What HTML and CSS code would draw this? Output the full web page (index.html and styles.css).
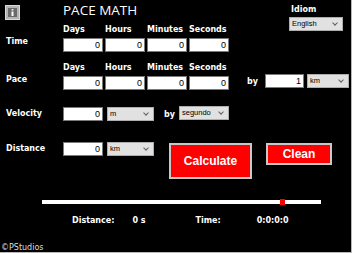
FILE: index.html
```html
<!DOCTYPE html>
<html lang="en">
<head>
    <meta charset="UTF-8">
    <title>Pace Math</title>
    <link rel="stylesheet" href="styles.css">
</head>
<body>

<div class="frame">
    <div class="top">
        <svg class="info-icon" width="15" height="15" viewBox="0 0 15 15">
            <rect x="0.5" y="0.5" width="14" height="14" fill="#b4b4b4" stroke="#d8d8d8"/>
            <rect x="3" y="3" width="9" height="9" fill="#6a6a6a"/>
            <rect x="6.5" y="4" width="2" height="1.5" fill="#e8e8e8"/>
            <rect x="6.5" y="6.5" width="2" height="4.5" fill="#ffffff"/>
        </svg>
        <h1 class="title">PACE MATH</h1>
        <div class="idiom">
            <span class="lbl">Idiom</span>
            <div class="select select-idiom">English<span class="chev"></span></div>
        </div>
    </div>

    <div class="row row-time">
        <span class="lbl row-label">Time</span>
        <div class="fields">
            <div class="field"><span class="lbl">Days</span><div class="input">0</div></div>
            <div class="field"><span class="lbl">Hours</span><div class="input">0</div></div>
            <div class="field"><span class="lbl">Minutes</span><div class="input">0</div></div>
            <div class="field"><span class="lbl">Seconds</span><div class="input">0</div></div>
        </div>
    </div>

    <div class="row row-pace">
        <span class="lbl row-label">Pace</span>
        <div class="fields">
            <div class="field"><span class="lbl">Days</span><div class="input">0</div></div>
            <div class="field"><span class="lbl">Hours</span><div class="input">0</div></div>
            <div class="field"><span class="lbl">Minutes</span><div class="input">0</div></div>
            <div class="field"><span class="lbl">Seconds</span><div class="input">0</div></div>
        </div>
        <div class="pace-by">
            <span class="lbl by">by</span>
            <div class="input input-by">1</div>
            <div class="select select-unit">km<span class="chev"></span></div>
        </div>
    </div>

    <div class="row row-velocity">
        <span class="lbl row-label">Velocity</span>
        <div class="input input-single">0</div>
        <div class="select select-small">m<span class="chev"></span></div>
        <span class="lbl by-vel">by</span>
        <div class="select select-time">segundo<span class="chev"></span></div>
    </div>

    <div class="row row-distance">
        <span class="lbl row-label">Distance</span>
        <div class="input input-single">0</div>
        <div class="select select-small">km<span class="chev"></span></div>
        <button type="button" class="btn btn-calc">Calculate</button>
        <button type="button" class="btn btn-clean">Clean</button>
    </div>

    <div class="track">
        <div class="thumb"></div>
    </div>

    <div class="results">
        <span class="lbl res-dist">Distance:</span>
        <span class="lbl res-dist-val">0 s</span>
        <span class="lbl res-time">Time:</span>
        <span class="lbl res-time-val">0:0:0:0</span>
    </div>

    <div class="footer">©PStudios</div>
</div>

</body>
</html>
```

FILE: styles.css
```css
/* Global */
body {
    margin: 0;
    background: #000;
    font-family: "DejaVu Sans", sans-serif;
}

/* Window frame */
.frame {
    width: 351px;
    height: 252px;
    background: #000;
    border-right: 1px solid #b8b8b8;
    border-bottom: 1px solid #b8b8b8;
    overflow: hidden;
}

/* Small bold labels */
.lbl {
    display: block;
    color: #fff;
    font-size: 8px;
    font-weight: bold;
    line-height: 11px;
    white-space: nowrap;
}

/* Header */
.top {
    display: flex;
    align-items: flex-start;
    height: 24px;
}

.info-icon {
    display: block;
    margin: 5px 0 0 5px;
}

.title {
    margin: 2px 0 0 43px;
    color: #fff;
    font-family: "Open Sans", sans-serif;
    font-size: 13.5px;
    font-weight: normal;
    line-height: 16px;
}

.idiom {
    margin: 4px 8px 0 auto;
    display: flex;
    flex-direction: column;
}

.idiom .lbl {
    margin: 0 0 2px 2px;
}

/* Rows */
.row {
    display: flex;
    align-items: flex-start;
}

.row-label {
    width: 57px;
    padding-left: 6px;
}

.row-time .row-label,
.row-pace .row-label {
    margin-top: 12px;
}

.row-pace {
    margin-top: 10px;
}

.fields {
    display: flex;
    gap: 2px;
}

.field .lbl {
    margin-bottom: 3px;
}

/* Text boxes */
.input {
    box-sizing: border-box;
    width: 40px;
    height: 14px;
    background: #fff;
    border: 1px solid #7a7a7a;
    color: #000;
    font-family: "Liberation Sans", sans-serif;
    font-size: 9px;
    line-height: 12px;
    text-align: right;
    padding-right: 2px;
}

/* Combo boxes */
.select {
    position: relative;
    box-sizing: border-box;
    height: 14px;
    background: #e1e1e1;
    border: 1px solid #adadad;
    color: #000;
    font-family: "Liberation Sans", sans-serif;
    font-size: 7.5px;
    line-height: 12px;
    padding-left: 2px;
}

.chev {
    position: absolute;
    right: 5px;
    top: 3px;
    width: 3px;
    height: 3px;
    border-right: 1px solid #606060;
    border-bottom: 1px solid #606060;
    transform: rotate(45deg);
}

.select-idiom {
    width: 54px;
}

/* Pace "by" group */
.pace-by {
    display: flex;
    align-items: flex-start;
    margin: 12px 0 0 18px;
}

.by {
    width: 18px;
    margin-top: 2px;
}

.input-by {
    width: 39px;
}

.select-unit {
    width: 42px;
    margin-left: 3px;
}

/* Velocity + distance */
.row-velocity {
    margin-top: 17px;
}

.row-velocity .row-label,
.row-distance .row-label {
    margin-top: 1px;
}

.select-small {
    width: 47px;
    margin-left: 4px;
}

.by-vel {
    margin: 2px 0 0 10px;
    width: 15px;
}

.select-time {
    width: 50px;
    margin-top: -1px;
}

.row-distance {
    margin-top: 21px;
}

/* Buttons */
.btn {
    box-sizing: border-box;
    background: #ff0000;
    border: 2px solid #c8c8c8;
    color: #fff;
    font-family: "Liberation Sans", sans-serif;
    font-weight: bold;
    font-size: 12px;
    padding: 0;
    cursor: pointer;
}

.btn-calc {
    width: 83px;
    height: 36px;
    margin: 1px 0 0 15px;
}

.btn-clean {
    width: 66px;
    height: 22px;
    margin: 1px 0 0 14px;
}

/* Progress track */
.track {
    position: relative;
    width: 279px;
    height: 4px;
    margin: 21px 0 0 42px;
    background: #fff;
}

.thumb {
    position: absolute;
    left: 238px;
    top: -1px;
    width: 5px;
    height: 6px;
    background: #ff0000;
}

/* Results */
.results {
    display: flex;
    margin-top: 11px;
}

.res-dist {
    margin-left: 72px;
}

.res-dist-val {
    margin-left: 18px;
}

.res-time {
    margin-left: 50px;
}

.res-time-val {
    margin-left: 36px;
}

/* Footer */
.footer {
    margin: 17px 0 0 1px;
    color: #ddd;
    font-size: 8px;
    line-height: 10px;
}
```
